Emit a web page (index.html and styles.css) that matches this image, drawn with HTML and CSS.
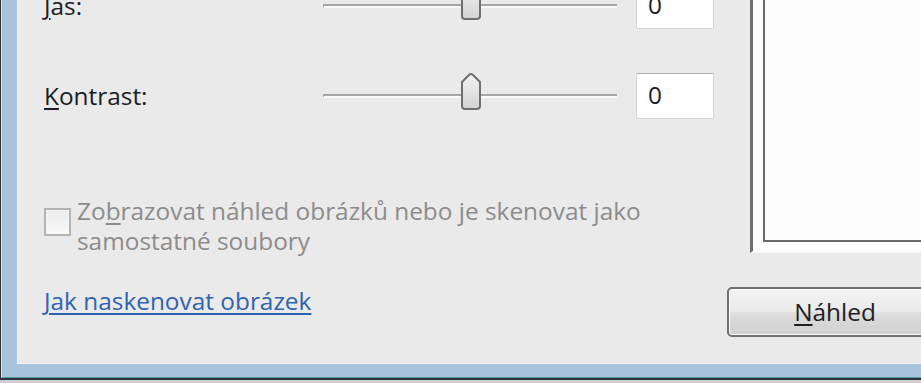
FILE: index.html
```html
<!DOCTYPE html>
<html lang="cs">

<head>
    <meta charset="UTF-8">
    <title>Skenovat</title>
    <link rel="stylesheet" href="styles.css">
</head>

<body>
    <div class="window">
        <div class="outer">
            <div class="frame">
                <div class="dialog">
                    <!-- levý sloupec s nastavením -->
                    <div class="settings">
                        <div class="row row-first">
                            <span class="label"><u>J</u>as:</span>
                            <div class="slider">
                                <div class="track"></div>
                                <svg class="thumb" width="24" height="40" viewBox="0 0 24 40">
                                    <defs>
                                        <linearGradient id="tg1" x1="0" y1="0" x2="0" y2="1">
                                            <stop offset="0" stop-color="#f4f4f4" />
                                            <stop offset="1" stop-color="#d2d2d2" />
                                        </linearGradient>
                                    </defs>
                                    <path d="M3 11 L10 4 Q12 2 14 4 L21 11 V35 Q21 38 18 38 H6 Q3 38 3 35 Z" fill="url(#tg1)" stroke="#6f6f6f" stroke-width="2" />
                                </svg>
                            </div>
                            <div class="field">0</div>
                        </div>
                        <div class="row">
                            <span class="label"><u>K</u>ontrast:</span>
                            <div class="slider">
                                <div class="track"></div>
                                <svg class="thumb" width="24" height="40" viewBox="0 0 24 40">
                                    <defs>
                                        <linearGradient id="tg2" x1="0" y1="0" x2="0" y2="1">
                                            <stop offset="0" stop-color="#f4f4f4" />
                                            <stop offset="1" stop-color="#d2d2d2" />
                                        </linearGradient>
                                    </defs>
                                    <path d="M3 11 L10 4 Q12 2 14 4 L21 11 V35 Q21 38 18 38 H6 Q3 38 3 35 Z" fill="url(#tg2)" stroke="#6f6f6f" stroke-width="2" />
                                </svg>
                            </div>
                            <div class="field">0</div>
                        </div>

                        <div class="check">
                            <span class="box"></span>
                            <span class="check-text">Zo<u>b</u>razovat náhled obrázků nebo je skenovat jako<br>samostatné soubory</span>
                        </div>

                        <a class="help" href="javascript:;">Jak naskenovat obrázek</a>
                    </div>

                    <!-- pravý sloupec s náhledem -->
                    <div class="side">
                        <div class="preview">
                            <div class="preview-inner"></div>
                        </div>
                        <button class="btn"><u>N</u>áhled</button>
                    </div>
                </div>
            </div>
        </div>
    </div>
</body>

</html>
```

FILE: styles.css
```css
* {
    padding: 0;
    margin: 0;
    box-sizing: border-box;
}

body {
    font-family: "Open Sans", "Noto Sans", sans-serif;
    font-size: 24.4px;
    line-height: 30px;
    color: #1c1c22;
    overflow: hidden;
}

.window {
    width: 921px;
    height: 383px;
    overflow: hidden;
    background-color: #cfcdd6;
}

.outer {
    height: 380px;
    border-left: 1px solid #303236;
    border-bottom: 2px solid #303236;
}

.frame {
    height: 378px;
    background-color: #a9c3da;
    border-left: 1px solid #dce4ec;
    border-bottom: 1px solid #4f9da6;
    padding: 0 0 13px 15px;
}

.dialog {
    height: 364px;
    background-color: #eaeaea;
    border-left: 1px solid #f3f3f3;
    border-bottom: 1px solid #f3f3f3;
    display: flex;
    overflow: hidden;
}

/* 左列 */
.settings {
    flex: 0 0 709px;
    padding-left: 26px;
    display: flex;
    flex-direction: column;
    align-items: flex-start;
}

.row {
    display: flex;
    align-items: center;
    height: 46px;
    margin-top: 44px;
}

.row-first {
    margin-top: -17px;
}

.label {
    width: 279px;
}

u {
    text-decoration-thickness: 2px;
    text-underline-offset: 3px;
}

.slider {
    position: relative;
    width: 294px;
    height: 46px;
}

.track {
    position: absolute;
    left: 0;
    right: 0;
    top: 21px;
    height: 4px;
    border-top: 2px solid #a6a6a6;
    border-left: 1px solid #9a9a9a;
    border-bottom: 2px solid #fbfbfb;
}

.thumb {
    position: absolute;
    left: 136px;
    top: -2px;
}

.field {
    width: 78px;
    height: 46px;
    margin-left: 19px;
    background-color: #fff;
    border: 1px solid #d6d6d6;
    border-top-color: #a9a9a9;
    border-radius: 2px;
    padding-left: 11px;
    line-height: 42px;
}

/* 复选框 */
.check {
    display: flex;
    align-items: flex-start;
    margin-top: 77px;
    color: #8c8c8c;
}

.box {
    flex: none;
    width: 27px;
    height: 28px;
    margin-top: 12px;
    margin-right: 6px;
    border: 2px solid #b4b4b4;
    background: linear-gradient(#ececec, #f8f8f8);
    box-shadow: inset 0 0 0 1px #f6f6f6;
}

.help {
    margin-top: 30px;
    color: #2e63b0;
    text-decoration: underline;
    text-decoration-thickness: 2px;
    text-underline-offset: 3px;
}

/* 右列 */
.side {
    flex: 1;
    min-width: 0;
    display: flex;
    flex-direction: column;
}

.preview {
    height: 253px;
    margin-left: 23px;
    background-color: #fdfdfd;
    border-left: 3px solid #6e6e6e;
    border-bottom: 2px solid #f7f7f7;
    padding: 0 0 9px 10px;
}

.preview-inner {
    height: 100%;
    border-left: 2px solid #6a6a6a;
    border-bottom: 2px solid #6a6a6a;
}

.btn {
    flex: none;
    width: 216px;
    height: 50px;
    margin-top: 34px;
    font: inherit;
    color: #1d1d22;
    border: 2px solid #707070;
    border-radius: 5px;
    background: linear-gradient(#f3f3f3 0%, #ebebeb 48%, #dddddd 52%, #d0d0d0 100%);
    box-shadow: inset 0 0 0 1px #fbfbfb;
    line-height: 44px;
}
```
